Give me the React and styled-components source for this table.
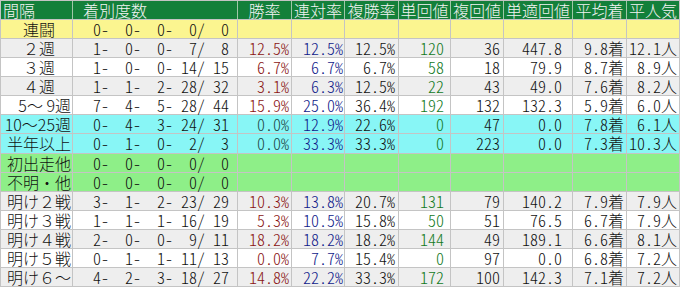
import React from "react";
import styled, { createGlobalStyle } from "styled-components";

const Global = createGlobalStyle`
  html, body {
    margin: 0;
    padding: 0;
    background: #ffffff;
  }
`;

const BG = {
  head: "#13803a",
  yellow: "#fbf590",
  gray: "#eeeeee",
  white: "#ffffff",
  cyan: "#88f6f6",
  green: "#8eef88",
};

const Table = styled.div`
  width: 680px;
  height: 287px;
  box-sizing: border-box;
  padding: 1px;
  display: flex;
  flex-direction: column;
  gap: 1px;
  background: #c4c4c4;
  font-family: "Noto Sans CJK JP", sans-serif;
  font-weight: 300;
  font-size: 16px;
  line-height: 16px;
`;

const Row = styled.div`
  flex: 1;
  display: grid;
  grid-template-columns: 71px 164px 53px 52px 53px 51px 52px 68px 53px 52px;
  gap: 1px;
  background: ${(p) => (p.$head ? "#9fc7a8" : "#c4c4c4")};
`;

const Cell = styled.div`
  background: ${(p) => p.$bg};
  color: ${(p) => p.$color || "#111111"};
  display: flex;
  align-items: center;
  justify-content: ${(p) => p.$align || "flex-end"};
  padding-right: ${(p) => p.$pr ?? 2}px;
  padding-left: ${(p) => p.$pl ?? 0}px;
  white-space: pre;
  font-feature-settings: ${(p) => (p.$full ? "normal" : '"hwid" 1')};
`;

const HeadCell = styled(Cell)`
  color: #f4f4f4;
`;

const cols = [
  { key: "win", color: "#8a1414", pr: 2 },
  { key: "ren", color: "#101a8a", pr: 1 },
  { key: "fuku", color: "#111111", pr: 3 },
  { key: "tan", color: "#137a1e", pr: 6 },
  { key: "fk", color: "#111111", pr: 3 },
  { key: "tt", color: "#111111", pr: 10 },
  { key: "avg", color: "#111111", pr: 2 },
  { key: "pop", color: "#111111", pr: 2 },
];

const heads = ["勝率", "連対率", "複勝率", "単回値", "複回値", "単適回値", "平均着", "平人気"];

const rows = [
  { label: "連闘　", bg: "yellow", c: [0, 0, 0, 0, 0] },
  { label: "２週　", bg: "gray", c: [1, 0, 0, 7, 8], s: ["12.5%", "12.5%", "12.5%", "120", "36", "447.8", "9.8着", "12.1人"] },
  { label: "３週　", bg: "white", c: [1, 0, 0, 14, 15], s: ["6.7%", "6.7%", "6.7%", "58", "18", "79.9", "8.7着", "8.9人"] },
  { label: "４週　", bg: "gray", c: [1, 1, 2, 28, 32], s: ["3.1%", "6.3%", "12.5%", "22", "43", "49.0", "7.6着", "8.2人"] },
  { label: "5〜 9週", bg: "white", c: [7, 4, 5, 28, 44], s: ["15.9%", "25.0%", "36.4%", "192", "132", "132.3", "5.9着", "6.0人"] },
  { label: "10〜25週", bg: "cyan", c: [0, 4, 3, 24, 31], s: ["0.0%", "12.9%", "22.6%", "0", "47", "0.0", "7.8着", "6.1人"], winColor: "#1d4848" },
  { label: "半年以上", bg: "cyan", c: [0, 1, 0, 2, 3], s: ["0.0%", "33.3%", "33.3%", "0", "223", "0.0", "7.3着", "10.3人"], winColor: "#1d4848" },
  { label: "初出走他", bg: "green", c: [0, 0, 0, 0, 0] },
  { label: "不明・他", bg: "green", c: [0, 0, 0, 0, 0] },
  { label: "明け２戦", bg: "gray", c: [3, 1, 2, 23, 29], s: ["10.3%", "13.8%", "20.7%", "131", "79", "140.2", "7.9着", "7.9人"] },
  { label: "明け３戦", bg: "white", c: [1, 1, 1, 16, 19], s: ["5.3%", "10.5%", "15.8%", "50", "51", "76.5", "6.7着", "7.9人"] },
  { label: "明け４戦", bg: "gray", c: [2, 0, 0, 9, 11], s: ["18.2%", "18.2%", "18.2%", "144", "49", "189.1", "6.6着", "8.1人"] },
  { label: "明け５戦", bg: "white", c: [0, 1, 1, 11, 13], s: ["0.0%", "7.7%", "15.4%", "0", "97", "0.0", "6.8着", "7.2人"] },
  { label: "明け６〜", bg: "gray", c: [4, 2, 3, 18, 27], s: ["14.8%", "22.2%", "33.3%", "172", "100", "142.3", "7.1着", "7.2人"] },
];

const counts = (c) => {
  const p = (n) => String(n).padStart(3, " ");
  return `${p(c[0])}-${p(c[1])}-${p(c[2])}-${p(c[3])}/${p(c[4])}`;
};

const App = () => {
  return (
    <>
      <Global />
      <Table>
        <Row $head>
          <HeadCell $bg={BG.head} $align="flex-start" $pl={2} $full>
            間隔
          </HeadCell>
          <HeadCell $bg={BG.head} $align="flex-start" $pl={10} $full>
            着別度数
          </HeadCell>
          {heads.map((h) => (
            <HeadCell key={h} $bg={BG.head} $align="center" $pr={0} $full>
              {h}
            </HeadCell>
          ))}
        </Row>
        {rows.map((r) => {
          const bg = BG[r.bg];
          return (
            <Row key={r.label}>
              <Cell $bg={bg} $pr={1} $full>
                {r.label}
              </Cell>
              <Cell $bg={bg} $pr={8}>
                {counts(r.c)}
              </Cell>
              {cols.map((col, i) => (
                <Cell
                  key={col.key}
                  $bg={bg}
                  $pr={col.pr}
                  $color={i === 0 && r.winColor ? r.winColor : col.color}
                >
                  {r.s ? r.s[i] : ""}
                </Cell>
              ))}
            </Row>
          );
        })}
      </Table>
    </>
  );
};

export default App;
